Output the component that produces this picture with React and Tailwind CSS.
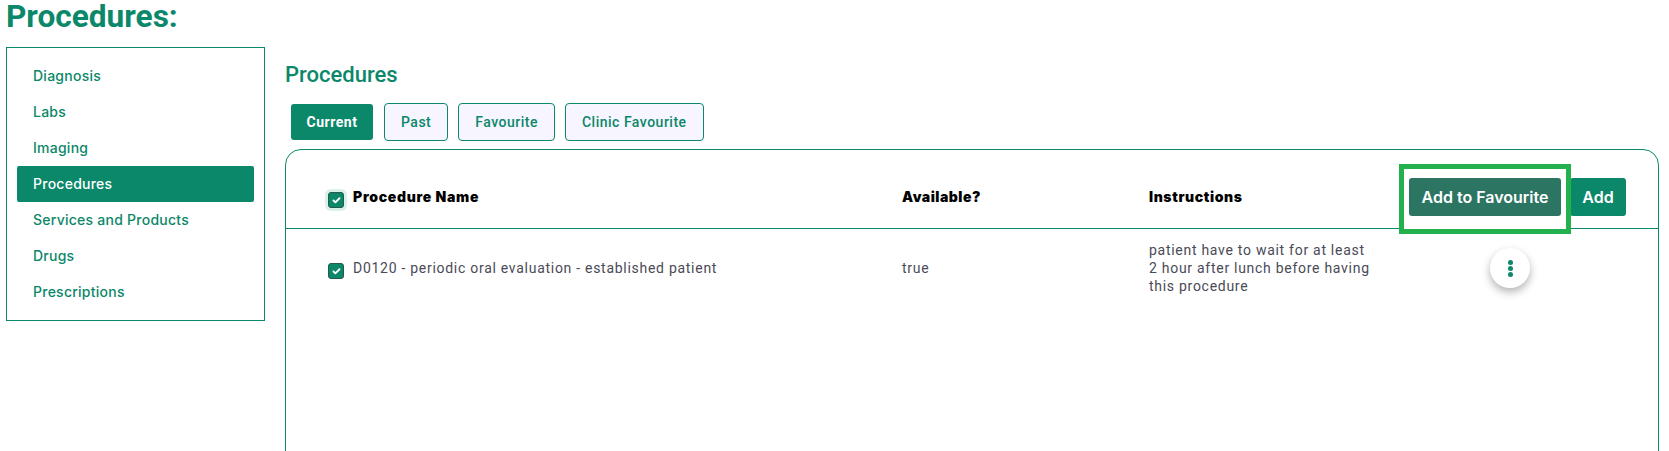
import { Check } from 'lucide-react';

const sideItems = ['Diagnosis', 'Labs', 'Imaging', 'Procedures', 'Services and Products', 'Drugs', 'Prescriptions'];
const tabs = ['Past', 'Favourite', 'Clinic Favourite'];

const CheckBox = ({ focused }) => (
  <span className={`flex h-4 w-4 shrink-0 items-center justify-center rounded-[3px] border border-[#24594c] bg-[#0b8769] ${focused ? 'shadow-[0_0_0_3px_#d9f0e4]' : ''}`}>
    <Check size={9} strokeWidth={5} className="text-white" />
  </span>
);

const App = () => {
  return (
    <div className="relative h-[451px] w-[1669px] overflow-hidden bg-white font-['Roboto',sans-serif]">
      <h1 className="pl-1.5 text-[31.6px] leading-[34px] font-bold text-[#0b8769]">Procedures:</h1>

      <div className="mt-[13px] flex items-start pl-1.5">
        {/* Side menu */}
        <div className="w-[259px] shrink-0 border border-[#0b8769] p-2.5 font-['Inter',sans-serif] text-sm font-medium tracking-[0.25px] text-[#0b8769]">
          {sideItems.map((item) => (
            <div
              key={item}
              className={`flex h-9 items-center rounded-[2px] pl-4 ${item === 'Procedures' ? 'bg-[#0b8769] text-white' : ''}`}
            >
              {item}
            </div>
          ))}
        </div>

        <div className="ml-5 w-[1374px] shrink-0">
          <h2 className="mt-4 text-[22px] leading-6 font-medium text-[#0b8769]">Procedures</h2>

          {/* Tabs */}
          <div className="mt-4 ml-1.5 flex items-center text-sm font-bold tracking-[0.5px]">
            <button className="mr-[11px] h-9 w-[82px] rounded-[3px] bg-[#0b8769] text-white">Current</button>
            {tabs.map((tab) => (
              <button key={tab} className="mr-2.5 h-[38px] rounded-[4px] border border-[#0b8769] bg-[#f7f5ff] px-4 font-medium text-[#0b8769]">
                {tab}
              </button>
            ))}
          </div>

          {/* Card */}
          <div className="mt-2 h-[400px] rounded-[16px] border border-[#0b8769]">
            <div className="flex h-[79px] items-center border-b border-[#0b8769] pt-7 pb-3 pl-[42px]">
              <div className="flex w-[574px] items-center gap-[9px]">
                <span className="mt-1.5"><CheckBox focused /></span>
                <span className="font-['Inter',sans-serif] text-sm font-black tracking-[0.7px] text-black">Procedure Name</span>
              </div>
              <span className="w-[247px] font-['Inter',sans-serif] text-sm font-black tracking-[0.5px] text-black">Available?</span>
              <span className="w-[260px] font-['Inter',sans-serif] text-sm font-black tracking-[0.6px] text-black">Instructions</span>
              <button className="h-[38px] w-[152px] rounded-[3px] bg-[#2b7562] font-['Inter',sans-serif] text-base font-semibold text-white">Add to Favourite</button>
              <button className="ml-[9px] h-[38px] w-14 rounded-[3px] bg-[#0b8769] font-['Inter',sans-serif] text-base font-semibold text-white">Add</button>
            </div>

            <div className="flex pt-3 pl-[42px] text-sm leading-[18px] tracking-[0.72px] text-[#4a4a57]">
              <div className="flex w-[574px] items-start gap-[9px] pt-[18px]">
                <span className="mt-1"><CheckBox /></span>
                <span>D0120 - periodic oral evaluation - established patient</span>
              </div>
              <span className="w-[247px] pt-[18px]">true</span>
              <span className="w-[222px]">patient have to wait for at least 2 hour after lunch before having this procedure</span>
              <button className="mt-[7px] ml-[119px] flex h-10 w-10 flex-col items-center justify-center gap-px rounded-full bg-white shadow-[0_4px_8px_rgba(0,0,0,0.3)]">
                <span className="h-[5px] w-[5px] rounded-full bg-[#0b8769]" />
                <span className="h-[5px] w-[5px] rounded-full bg-[#0b8769]" />
                <span className="h-[5px] w-[5px] rounded-full bg-[#0b8769]" />
              </button>
            </div>
          </div>
        </div>
      </div>

      {/* Green highlight drawn over the screenshot, hides the divider inside it */}
      <div className="absolute top-[164px] left-[1399px] h-[70px] w-[172px] border-[5px] border-[#22b14c]">
        <div className="absolute right-0 bottom-0 left-0 h-[2px] bg-white" />
      </div>
    </div>
  );
};

export default App;
